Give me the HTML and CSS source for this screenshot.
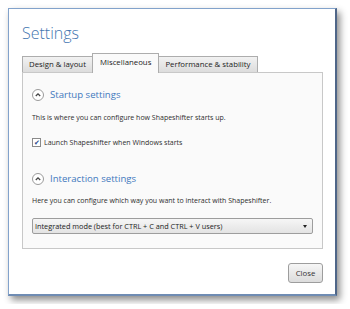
FILE: index.html
```html
<!DOCTYPE html>
<html>
  <head>
    <title>Settings</title>
    <link rel="stylesheet" href="styles.css">
  </head>
  <body>
    <div class="window">
      <h1>Settings</h1>

      <div class="tabs">
        <div class="tab">Design &amp; layout</div>
        <div class="tab active">Miscellaneous</div>
        <div class="tab">Performance &amp; stability</div>
      </div>

      <div class="panel">
        <section class="group">
          <h2><span class="toggle"><svg width="12" height="12" viewBox="0 0 12 12"><circle cx="6" cy="6" r="5.5" fill="#fff" stroke="#9a9a9a"/><path d="M3.8 7 L6 4.8 L8.2 7" fill="none" stroke="#444" stroke-width="1.3"/></svg></span>Startup settings</h2>
          <p>This is where you can configure how Shapeshifter starts up.</p>
          <label class="check"><span class="box">&#10004;</span>Launch Shapeshifter when Windows starts</label>
        </section>

        <section class="group second">
          <h2><span class="toggle"><svg width="12" height="12" viewBox="0 0 12 12"><circle cx="6" cy="6" r="5.5" fill="#fff" stroke="#9a9a9a"/><path d="M3.8 7 L6 4.8 L8.2 7" fill="none" stroke="#444" stroke-width="1.3"/></svg></span>Interaction settings</h2>
          <p>Here you can configure which way you want to interact with Shapeshifter.</p>
          <div class="select">
            <span>Integrated mode (best for CTRL + C and CTRL + V users)</span>
            <span class="arrow"></span>
          </div>
        </section>
      </div>

      <div class="footer">
        <button>Close</button>
      </div>
    </div>
  </body>
</html>
```

FILE: styles.css
```css
body{
  margin:0;
  padding:8px;
  background:#fff;
  font-family:"Open Sans", "Noto Sans", sans-serif;
  color:#333;
}
.window{
  width:329px;
  height:288px;
  border:1px solid #82a2cb;
  border-right:2px solid #4f6688;
  border-bottom:2px solid #6f8cb3;
  background:#fff;
  box-shadow:3px 4px 7px rgba(0,0,0,0.45);
  padding:0 12px 0 13px;
  box-sizing:border-box;
  display:flex;
  flex-direction:column;
}
h1{
  margin:13px 0 0 0;
  font-size:16px;
  font-weight:300;
  line-height:22px;
  color:#4476b0;
}
.tabs{
  display:flex;
  align-items:flex-end;
  height:20px;
  margin-top:8px;
}
.tab{
  font-size:7.8px;
  color:#222;
  height:16px;
  line-height:15px;
  padding:0 6px;
  box-sizing:border-box;
  border:1px solid #adadad;
  border-bottom:none;
  background:linear-gradient(#f2f2f2, #dcdcdc);
  margin-right:-1px;
}
.tab.active{
  height:20px;
  line-height:17px;
  padding:0 7px;
  background:#fafafa;
  position:relative;
  z-index:1;
  margin-bottom:-1px;
}
.panel{
  width:301px;
  height:177px;
  box-sizing:border-box;
  border:1px solid #c8c8c8;
  background:#fafafa;
  padding:9px 9px 0 9px;
}
.group h2{
  display:flex;
  align-items:center;
  margin:6px 0 0 0;
  font-size:9.6px;
  font-weight:normal;
  color:#3f78bd;
  line-height:14px;
}
.toggle{
  display:inline-flex;
  width:12px;
  height:12px;
  margin-right:6px;
}
.group p{
  margin:11px 0 0 0;
  font-size:7px;
  line-height:10px;
  color:#2e2e2e;
}
.check{
  display:flex;
  align-items:center;
  margin-top:15px;
  font-size:7px;
  color:#2e2e2e;
}
.box{
  width:7px;
  height:7px;
  border:1px solid #8a8a8a;
  background:#fff;
  font-size:7px;
  line-height:7px;
  color:#2b4b8c;
  text-align:center;
  margin-right:3px;
}
.group.second{
  margin-top:25px;
}
.group.second p{
  margin-top:10px;
}
.select{
  display:flex;
  justify-content:space-between;
  align-items:center;
  margin-top:12px;
  height:16px;
  box-sizing:border-box;
  border:1px solid #9d9d9d;
  border-radius:2px;
  background:linear-gradient(#f6f6f6, #e3e3e3);
  padding:0 5px 0 2px;
  font-size:7.3px;
  color:#222;
}
.arrow{
  width:0;
  height:0;
  border-left:2.5px solid transparent;
  border-right:2.5px solid transparent;
  border-top:3px solid #222;
}
.footer{
  display:flex;
  justify-content:flex-end;
  margin-top:14px;
}
.footer button{
  width:35px;
  height:20px;
  font-family:inherit;
  font-size:7.8px;
  color:#333;
  border:1px solid #9d9d9d;
  border-radius:3px;
  background:linear-gradient(#f6f6f6, #dcdcdc);
  padding:0;
}
```
